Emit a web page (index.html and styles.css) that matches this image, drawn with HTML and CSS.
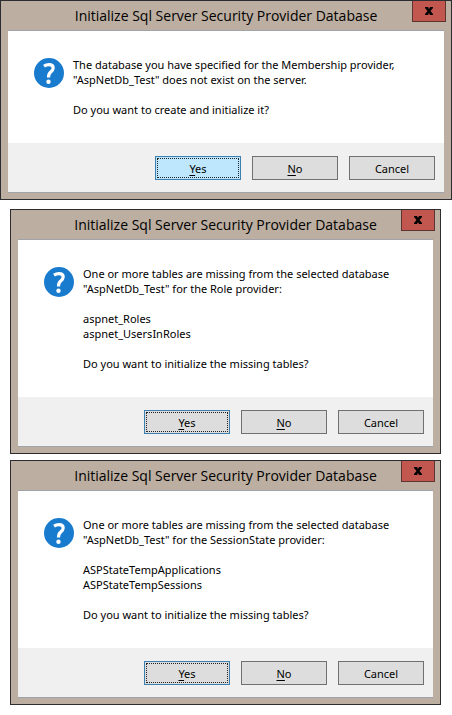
FILE: index.html
```html
<!DOCTYPE html>
<html lang="en">
<head>
<meta charset="utf-8">
<meta name="viewport" content="width=device-width, initial-scale=1">
<title>Initialize Sql Server Security Provider Database</title>
<link rel="stylesheet" href="styles.css">
</head>
<body>
<svg class="defs" aria-hidden="true">
  <symbol id="question" viewBox="0 0 30 30">
    <circle cx="15" cy="15" r="15" fill="#197bce"/>
    <path d="M10 8.200C11.500 7.200 13.200 6.700 15 6.700C17.800 6.700 19.200 8 19.200 10.100C19.200 12 18 13 16.700 14.100C15.200 15.300 14.500 16.400 14.500 19.500" fill="none" stroke="#fff" stroke-width="3.200"/>
    <circle cx="14.500" cy="23.800" r="2.200" fill="#fff"/>
  </symbol>
  <symbol id="close" viewBox="0 0 10 8">
    <path d="M1 0h3l1 2 1-2h3v1L6.500 4 9 7v1H6L5 6 4 8H1V7l2.500-3L1 1z" fill="#000"/>
  </symbol>
</svg>
<main class="stack">
  <section class="dialog dialog-wide" role="dialog" aria-labelledby="t1">
    <header class="titlebar">
      <h2 class="title" id="t1">Initialize Sql Server Security Provider Database</h2>
      <button class="close" type="button" aria-label="Close"><svg><use href="#close"/></svg></button>
    </header>
    <div class="client">
      <div class="message">
        <svg class="icon" aria-hidden="true"><use href="#question"/></svg>
        <div class="text">
          <p>The database you have specified for the Membership provider,<br>"AspNetDb_Test" does not exist on the server.</p>
          <p>Do you want to create and initialize it?</p>
        </div>
      </div>
      <footer class="actions">
        <button class="btn default hot" type="button"><u>Y</u>es</button>
        <button class="btn" type="button"><u>N</u>o</button>
        <button class="btn" type="button">Cancel</button>
      </footer>
    </div>
  </section>
  <section class="dialog" role="dialog" aria-labelledby="t2">
    <header class="titlebar">
      <h2 class="title" id="t2">Initialize Sql Server Security Provider Database</h2>
      <button class="close" type="button" aria-label="Close"><svg><use href="#close"/></svg></button>
    </header>
    <div class="client">
      <div class="message">
        <svg class="icon" aria-hidden="true"><use href="#question"/></svg>
        <div class="text">
          <p>One or more tables are missing from the selected database<br>"AspNetDb_Test" for the Role provider:</p>
          <p>aspnet_Roles<br>aspnet_UsersInRoles</p>
          <p>Do you want to initialize the missing tables?</p>
        </div>
      </div>
      <footer class="actions">
        <button class="btn default" type="button"><u>Y</u>es</button>
        <button class="btn" type="button"><u>N</u>o</button>
        <button class="btn" type="button">Cancel</button>
      </footer>
    </div>
  </section>
  <section class="dialog" role="dialog" aria-labelledby="t3">
    <header class="titlebar">
      <h2 class="title" id="t3">Initialize Sql Server Security Provider Database</h2>
      <button class="close" type="button" aria-label="Close"><svg><use href="#close"/></svg></button>
    </header>
    <div class="client">
      <div class="message">
        <svg class="icon" aria-hidden="true"><use href="#question"/></svg>
        <div class="text">
          <p>One or more tables are missing from the selected database<br>"AspNetDb_Test" for the SessionState provider:</p>
          <p>ASPStateTempApplications<br>ASPStateTempSessions</p>
          <p>Do you want to initialize the missing tables?</p>
        </div>
      </div>
      <footer class="actions">
        <button class="btn default" type="button"><u>Y</u>es</button>
        <button class="btn" type="button"><u>N</u>o</button>
        <button class="btn" type="button">Cancel</button>
      </footer>
    </div>
  </section>
</main>
</body>
</html>
```
FILE: styles.css
```css
* {
  box-sizing: border-box;
}

body {
  margin: 0;
  background: #fff;
  color: #000;
  font: 11px/15px "Noto Sans", "Open Sans", sans-serif;
}

.defs {
  position: absolute;
  width: 0;
  height: 0;
}

.stack {
  display: flex;
  flex-direction: column;
  gap: 6px;
}

.dialog {
  margin: 0 11px 0 10px;
  padding: 0 7px 6px;
  border: 1px solid #2d2d31;
  background: #bcaea1;
}

.dialog-wide {
  margin: 0 0 3px;
}

.titlebar {
  display: flex;
  position: relative;
  justify-content: center;
  height: 29px;
}

.title {
  margin: 0;
  font: 14px/29px "Open Sans", "Noto Sans", sans-serif;
  white-space: nowrap;
}

.close {
  display: flex;
  position: absolute;
  top: 0;
  right: -2px;
  align-items: center;
  justify-content: center;
  width: 34px;
  height: 21px;
  padding: 0;
  border: 1px solid #5d3432;
  border-top: 0;
  background: #c1574e;
}

.close svg {
  width: 10px;
  height: 8px;
}

.client {
  border-top: 1px solid #a0a3a9;
  border-bottom: 1px solid #a0a3a9;
  background: #fff;
}

.message {
  display: flex;
  gap: 9px;
  padding: 26px;
}

.icon {
  flex: none;
  width: 30px;
  height: 30px;
  margin-top: 1px;
}

.text {
  white-space: nowrap;
}

.text p {
  margin: 0;
}

.text p + p {
  margin-top: 15px;
}

.actions {
  display: flex;
  justify-content: flex-end;
  gap: 11px;
  padding: 13px 9px 12px;
  background: #f0f0f0;
}

.btn {
  width: 86px;
  height: 24px;
  padding: 0;
  border: 1px solid #707070;
  background: #ddd;
  color: #000;
  font: inherit;
}

.btn u {
  text-underline-offset: 2px;
}

.default {
  border-color: #3c7fb1;
  outline: 1px dotted #222;
  outline-offset: -3px;
}

.hot {
  background: #bee6fd;
}
```
